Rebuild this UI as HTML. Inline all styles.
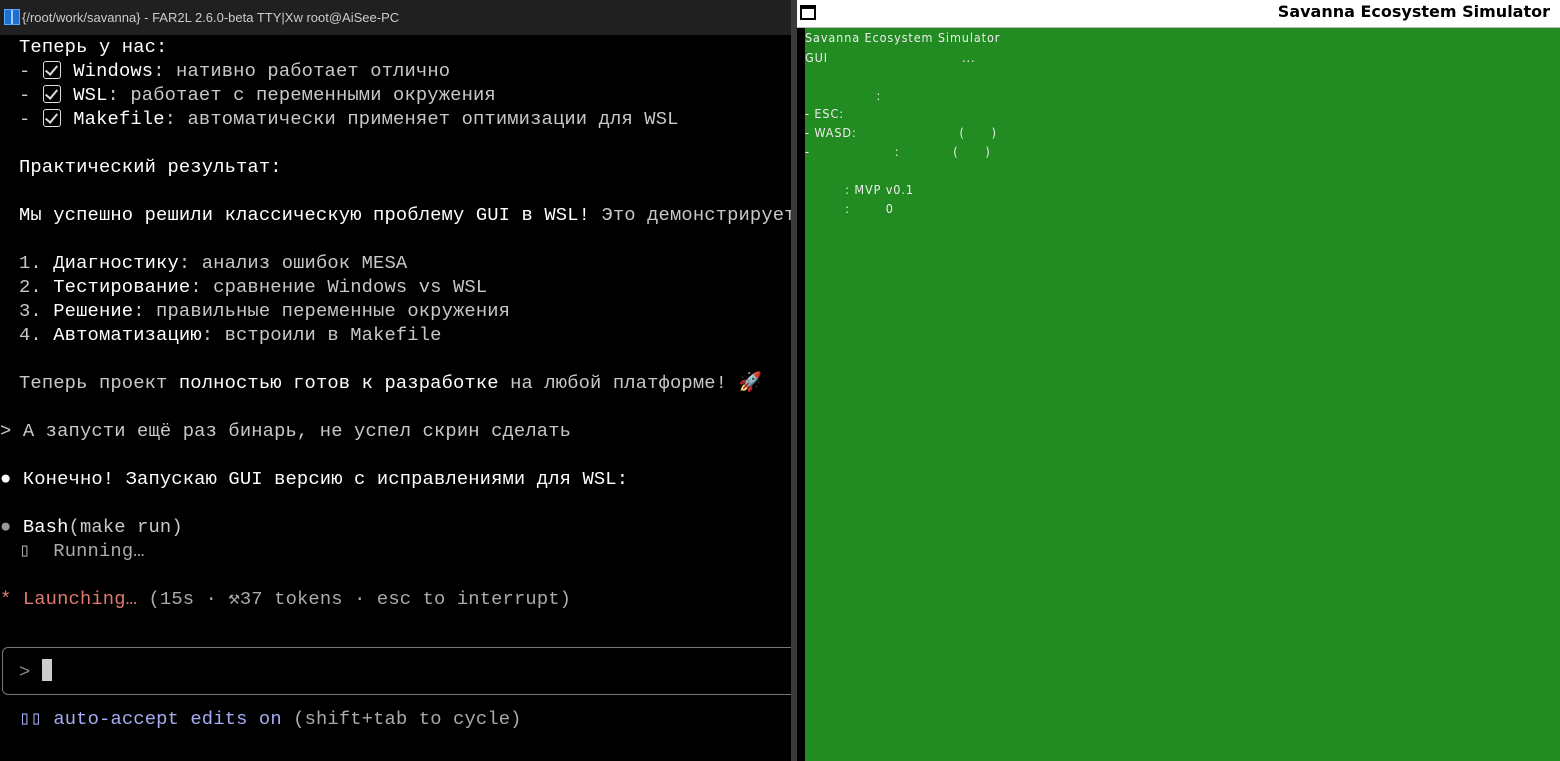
<!DOCTYPE html>
<html><head><meta charset="utf-8"><style>
*{margin:0;padding:0;box-sizing:border-box}
body{width:1560px;height:761px;overflow:hidden;background:#000;position:relative;font-family:"Liberation Mono","DejaVu Sans Mono",monospace}
.tb{position:absolute;left:0;top:0;width:791px;height:35px;background:#202020;color:#ccc;font:13px "Liberation Sans",sans-serif;line-height:35px;padding-left:22px}
.ico{position:absolute;left:4px;top:9px;width:16px;height:16px;background:#1e6fd0;border:1px solid #5af}
.ico:after{content:"";position:absolute;left:6px;top:0;width:2px;height:14px;background:#9cf}
.t{position:absolute;left:19px;font-size:18.8px;line-height:24px;white-space:pre;color:#c8c8c8;letter-spacing:0.15px}
.w{color:#fff}
.cb{display:inline-block;width:18px;height:18px;border:1.5px solid #ddd;border-radius:3px;vertical-align:-3px;position:relative;margin:0 1px}
.cb:after{content:"";position:absolute;left:4px;top:1px;width:5px;height:10px;border:solid #ddd;border-width:0 2px 2px 0;transform:rotate(40deg)}
.sep{position:absolute;left:791px;top:0;width:6px;height:761px;background:#3a3a3a}
.rt{position:absolute;left:797px;top:0;width:763px;height:28px;background:#fff;border-bottom:1px solid #bbb}
.rt .b{position:absolute;left:3px;top:5px;width:16px;height:15px;border:2px solid #000;border-top-width:4px}
.rt .n{position:absolute;right:10px;top:0;font:bold 16px "DejaVu Sans","Liberation Sans",sans-serif;line-height:24px;color:#000}
.gb{position:absolute;left:797px;top:28px;width:8px;height:733px;background:#000}
.g{position:absolute;left:805px;top:28px;width:755px;height:733px;background:#228b22}
.gt{position:absolute;left:805px;font:12.5px "DejaVu Sans Condensed","Liberation Sans Narrow","Liberation Sans",sans-serif;letter-spacing:0.9px;color:#eee;white-space:pre;line-height:19px}
</style></head><body>
<div class="tb"><div class="ico"></div>{/root/work/savanna} - FAR2L 2.6.0-beta TTY|Xw root@AiSee-PC</div>
<div class="t w" style="top:35px">Теперь у нас:</div>
<div class="t" style="top:59px">- <span class="cb"></span> <span class="w">Windows</span>: нативно работает отлично</div>
<div class="t" style="top:83px">- <span class="cb"></span> <span class="w">WSL</span>: работает с переменными окружения</div>
<div class="t" style="top:107px">- <span class="cb"></span> <span class="w">Makefile</span>: автоматически применяет оптимизации для WSL</div>
<div class="t w" style="top:155px">Практический результат:</div>
<div class="t" style="top:203px"><span class="w">Мы успешно решили классическую проблему GUI в WSL!</span> Это демонстрирует</div>
<div class="t" style="top:251px">1. <span class="w">Диагностику</span>: анализ ошибок MESA</div>
<div class="t" style="top:275px">2. <span class="w">Тестирование</span>: сравнение Windows vs WSL</div>
<div class="t" style="top:299px">3. <span class="w">Решение</span>: правильные переменные окружения</div>
<div class="t" style="top:323px">4. <span class="w">Автоматизацию</span>: встроили в Makefile</div>
<div class="t" style="top:371px">Теперь проект <span class="w">полностью готов к разработке</span> на любой платформе! 🚀</div>
<div class="t" style="top:419px;left:0">&gt; А запусти ещё раз бинарь, не успел скрин сделать</div>
<div class="t w" style="top:467px;left:0">● Конечно! Запускаю GUI версию с исправлениями для WSL:</div>
<div class="t" style="top:515px;left:0"><span style="color:#999">●</span> <span class="w">Bash</span>(make run)</div>
<div class="t" style="top:539px;color:#aaa">▯  Running…</div>
<div class="t" style="top:587px;left:0;color:#aaa"><span style="color:#e0796d">* Launching…</span> (15s · ⚒37 tokens · esc to interrupt)</div>
<div style="position:absolute;left:2px;top:647px;width:800px;height:48px;border:1.5px solid #777;border-radius:6px"></div>
<div class="t" style="top:659px;color:#888">&gt; <span style="display:inline-block;width:10px;height:22px;background:#ccc;vertical-align:-4px"></span></div>
<div class="t" style="top:707px"><span style="color:#a7acf5">▯▯ auto-accept edits on</span> <span style="color:#aaa">(shift+tab to cycle)</span></div>
<div class="sep"></div>
<div class="rt"><div class="b"></div><div class="n">Savanna Ecosystem Simulator</div></div>
<div class="gb"></div>
<div class="g"></div>
<div class="gt" style="top:28px">Savanna Ecosystem Simulator</div>
<div class="gt" style="top:48px">GUI                              ...</div>
<div class="gt" style="top:86px">                :</div>
<div class="gt" style="top:104px">- ESC:</div>
<div class="gt" style="top:123px">- WASD:                       (      )</div>
<div class="gt" style="top:142px">-                   :            (      )</div>
<div class="gt" style="top:180px">         : MVP v0.1</div>
<div class="gt" style="top:199px">         :        0</div>
</body></html>
